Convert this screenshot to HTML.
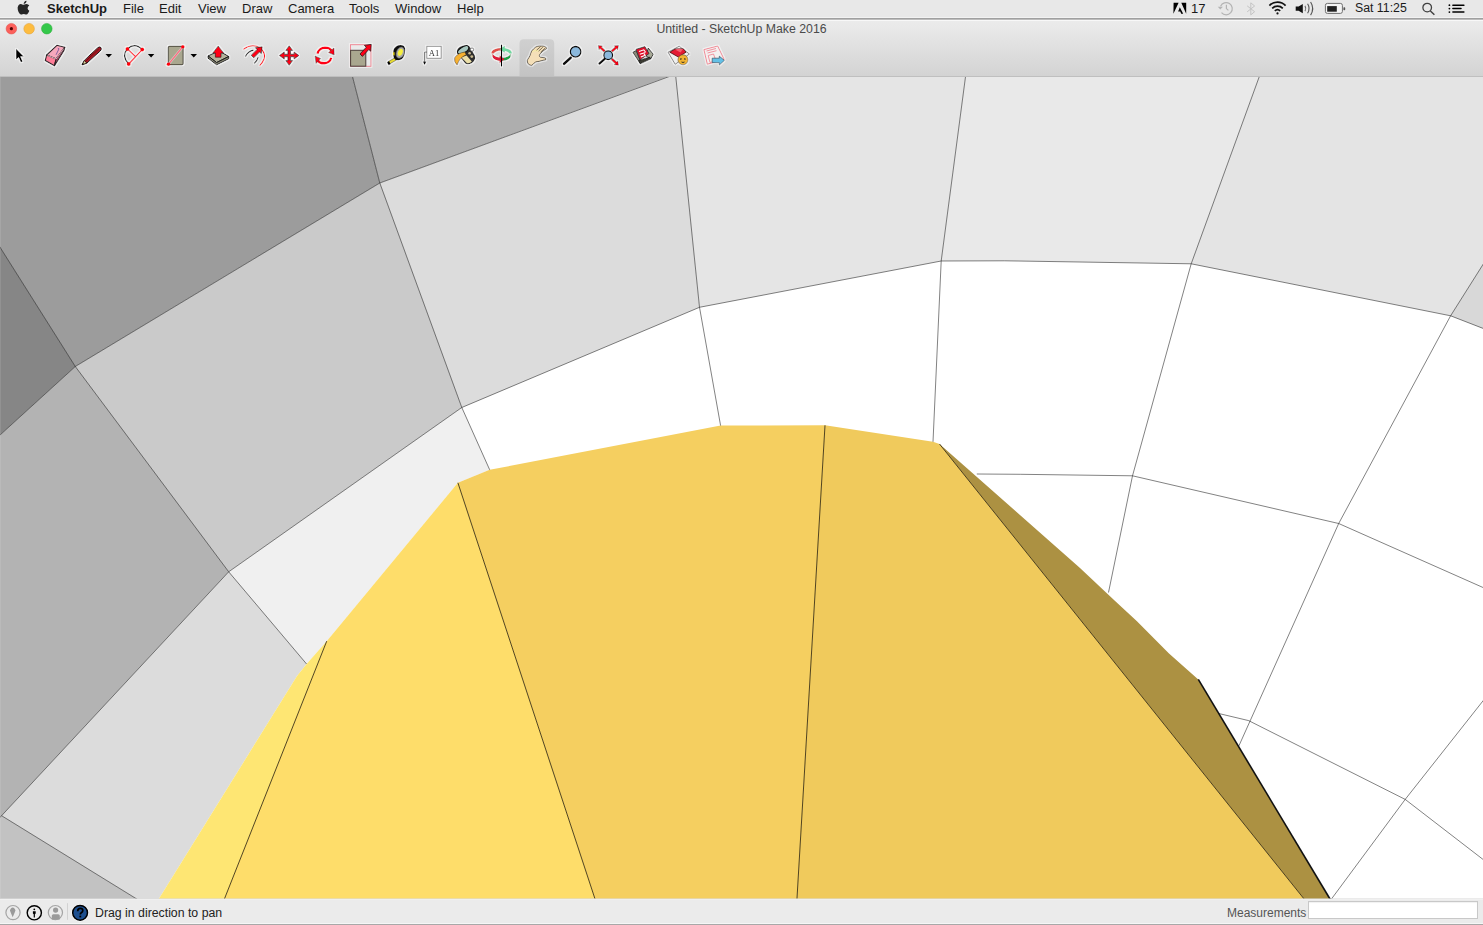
<!DOCTYPE html>
<html><head><meta charset="utf-8">
<style>
html,body{margin:0;padding:0;}
body{width:1483px;height:925px;overflow:hidden;position:relative;background:#e4e4e4;font-family:"Liberation Sans",sans-serif;}
.abs{position:absolute;}
#menubar{left:0;top:0;width:1483px;height:18px;background:linear-gradient(#e8e8e8,#e8e8e8 17px,#f2f2f2 17px);border-bottom:1px solid #a0a0a0;box-sizing:content-box;}
#menubar .m{position:absolute;top:1px;font-size:13px;color:#1a1a1a;line-height:15px;white-space:nowrap;}
#toolbar{left:0;top:19px;width:1483px;height:57px;background:linear-gradient(#bcbcbc,#bcbcbc 1px,#f8f8f8 1px,#f8f8f8 2px,#ebebeb 2px,#e9e9e9 8px,#d3d3d3);border-bottom:1px solid #bfbfbf;}
#title{left:0;top:22px;width:1483px;text-align:center;font-size:12.3px;color:#4a4a4a;line-height:14px;}
#status{left:0;top:898px;width:1483px;height:27px;background:linear-gradient(#f0f0f0,#f0f0f0 1px,#ebebeb 1px,#ebebeb 24px,#f6f6f6 24px,#f6f6f6 25px,#a8a8a8 25px);background-clip:padding-box;border-top:1px solid rgba(219,219,219,0.56);box-sizing:border-box;}
#status .t{position:absolute;font-size:12px;line-height:14px;white-space:nowrap;}
</style></head><body>
<svg class="abs" style="left:0;top:0" width="1483" height="925" viewBox="0 0 1483 925">
  <g id="faces">
<rect x="0" y="60" width="1483" height="850" fill="#fff"/>
<polygon fill="#9c9c9c" points="0.0,70.0 350.8,70.0 379.8,183.0 75.3,366.5 0.0,247.3"/>
<polygon fill="#868686" points="0.0,247.3 75.3,366.5 0.0,435.0"/>
<polygon fill="#aeaeae" points="350.8,70.0 686.9,70.0 379.8,183.0"/>
<polygon fill="#dcdcdc" points="379.8,183.0 675.8,73.6 699.5,307.3 461.8,407.5"/>
<polygon fill="#e5e5e5" points="675.1,70.0 966.4,70.0 941.2,261.0 699.5,307.3"/>
<polygon fill="#e9e9e9" points="966.4,70.0 1261.7,70.0 1191.2,263.8 1080.0,262.0 1004.4,260.8 941.2,261.0"/>
<polygon fill="#e4e4e4" points="1261.7,70.0 1490.0,70.0 1490.0,253.4 1450.6,315.8 1191.2,263.8"/>
<polygon fill="#d8d8d8" points="1490.0,253.4 1450.6,315.8 1490.0,331.1"/>
<polygon fill="#cacaca" points="75.3,366.5 379.8,183.0 461.8,407.5 228.7,571.8"/>
<polygon fill="#b3b3b3" points="0.0,435.0 75.3,366.5 228.7,571.8 1.6,815.7 0.0,817.4"/>
<polygon fill="#f0f0f0" points="228.7,571.8 461.8,407.5 489.7,469.8 457.9,482.8 326.7,641.2 306.6,664.0"/>
<polygon fill="#dcdcdc" points="1.6,815.7 228.7,571.8 306.6,664.0 297.0,676.0 155.0,905.0 146.5,905.0"/>
<polygon fill="#c2c2c2" points="0.0,817.4 1.6,815.7 146.5,905.0 0.0,905.0"/>
<polygon fill="#fee673" points="326.7,641.2 222.0,905.0 155.0,905.0 297.0,676.0 306.6,664.0"/>
<polygon fill="#fedd6a" points="457.9,482.8 597.0,905.0 222.0,905.0 326.7,641.2"/>
<polygon fill="#f5cf60" points="457.9,482.8 489.7,469.8 720.6,425.6 825.0,425.3 796.6,905.0 597.0,905.0"/>
<polygon fill="#f0ca5c" points="825.0,425.3 933.0,441.8 939.5,444.0 1308.9,905.0 796.6,905.0"/>
<polygon fill="#ac9142" points="939.5,444.0 1080.0,567.9 1114.0,600.0 1136.7,621.0 1169.0,653.5 1198.3,679.4 1333.6,905.0 1308.9,905.0"/>
<g fill="none" stroke="#000" stroke-width="0.9" stroke-opacity="0.55">
<polyline points="350.8,70.0 379.8,183.0 686.9,70.0"/>
<polyline points="-5.0,239.3 75.3,366.5 379.8,183.0"/>
<polyline points="-5.0,439.6 75.3,366.5 228.7,571.8 461.8,407.5 379.8,183.0"/>
<polyline points="228.7,571.8 1.6,815.7 -5.0,822.7"/>
<polyline points="228.7,571.8 306.6,664.0"/>
<polyline points="461.8,407.5 489.7,469.8"/>
<polyline points="461.8,407.5 699.5,307.3 941.2,261.0 1004.4,260.8 1080.0,262.0 1191.2,263.8 1450.6,315.8 1490.0,331.1"/>
<polyline points="675.1,70.0 699.5,307.3 720.6,425.6"/>
<polyline points="966.4,70.0 941.2,261.0 933.0,441.8"/>
<polyline points="1261.7,70.0 1191.2,263.8 1132.5,475.8 1108.5,592.5"/>
<polyline points="1490.0,253.4 1450.6,315.8 1338.7,523.5 1238.9,745.9"/>
<polyline points="976.8,474.0 1020.6,474.3 1132.5,475.8 1338.7,523.5 1490.0,590.6"/>
<polyline points="1218.8,713.5 1248.6,720.6 1405.2,799.4 1490.0,864.8"/>
<polyline points="1490.0,692.0 1405.2,799.4 1327.0,905.0"/>
<polyline points="1.6,815.7 146.5,905.0"/>
</g>
<g fill="none" stroke="#3e3212" stroke-width="0.9">
<polyline points="326.7,641.2 222.0,905.0"/>
<polyline points="457.9,482.8 597.0,905.0"/>
<polyline points="825.0,425.3 796.6,905.0"/>
<polyline points="939.5,444.0 1308.9,905.0"/>
</g>
<rect x="0" y="77" width="1" height="821" fill="#fff" fill-opacity="0.1"/>
<polyline fill="none" stroke="#111" stroke-width="1.6" points="1198.3,679.4 1333.6,905.0"/>
</g><!--/faces-->
</svg>
<div id="menubar" class="abs">
<svg class="abs" style="left:0;top:0" width="1483" height="18" viewBox="0 0 1483 18">
<!-- apple -->
<path transform="translate(1.4,0.2)" d="M26.2,8.3 Q26.1,6.3 27.9,5.3 Q26.9,3.8 25,3.8 Q23.8,3.8 23,4.2 Q22.4,4.5 22,4.5 Q21.5,4.5 20.8,4.2 Q20,3.8 19.3,3.9 Q17.6,4 16.8,5.5 Q15.9,7 16.4,9.5 Q16.9,11.8 18.1,13.3 Q18.9,14.3 19.8,14.3 Q20.4,14.3 21,14 Q21.6,13.7 22.3,13.7 Q23,13.7 23.6,14 Q24.2,14.3 24.8,14.3 Q25.9,14.2 26.8,12.7 Q27.4,11.8 27.9,10.6 Q26.3,9.9 26.2,8.3 Z M24.3,2.9 Q25.2,1.8 25.1,0.6 Q23.9,0.7 23.1,1.6 Q22.3,2.5 22.3,3.7 Q23.5,3.8 24.3,2.9 Z" fill="#262626"/>
<!-- adobe -->
<path d="M1173.6,2.7 H1178.6 L1173.4,13.8 Z M1181.3,2.7 H1186.2 V13.8 Z M1179.8,7.2 L1183.2,13.8 H1181.2 L1180.3,11.6 H1178.1 Z" fill="#000"/>
<!-- time machine -->
<g fill="none" stroke="#b4b4b4" stroke-width="1.2">
<path d="M1220.6,6.2 A6.1,6.1 0 1 1 1221.5,12.6"/>
<path d="M1226.4,4.8 V8.6 L1228.4,10.4"/>
</g>
<path d="M1217.8,6.8 L1222.9,6.8 L1220.3,9.6 Z" fill="#b4b4b4"/>
<!-- bluetooth -->
<path d="M1247.2,5.9 L1254.6,11.7 L1250.8,14.9 V2.8 L1254.6,6 L1247.2,11.8" fill="none" stroke="#c4c4c4" stroke-width="1"/>
<!-- wifi -->
<g fill="none" stroke="#111" stroke-width="1.7" stroke-linecap="butt">
<path d="M1269.4,5.6 A11,11 0 0 1 1285.6,5.6"/>
<path d="M1272.2,8.3 A7.6,7.6 0 0 1 1282.8,8.3"/>
<path d="M1274.8,10.8 A4,4 0 0 1 1280.2,10.8"/>
</g>
<circle cx="1277.5" cy="13.4" r="1.1" fill="#111"/>
<!-- volume -->
<path d="M1295.7,6.4 H1298.6 L1302.8,3.9 V13.2 L1298.6,10.8 H1295.7 Z" fill="#111"/>
<g fill="none" stroke-width="1.1">
<path d="M1305,5.9 Q1306.6,8.5 1305,11.1" stroke="#666"/>
<path d="M1307.6,3.8 Q1310.6,8.5 1307.6,13.2" stroke="#555"/>
<path d="M1310.6,2 Q1314.8,8.5 1310.6,15.1" stroke="#555"/>
</g>
<!-- battery -->
<rect x="1325.4" y="3.4" width="17" height="10" rx="2" fill="#f4f4f4" stroke="#6e6e6e" stroke-width="1"/>
<rect x="1327.2" y="6.1" width="9.6" height="5.6" fill="#222"/>
<rect x="1343.4" y="7.3" width="1.8" height="2.9" rx="0.7" fill="#555"/>
<!-- search -->
<circle cx="1427.2" cy="7.6" r="4.3" fill="none" stroke="#404040" stroke-width="1.3"/>
<line x1="1430.4" y1="10.9" x2="1434.4" y2="14.7" stroke="#404040" stroke-width="1.4"/>
<!-- list -->
<g fill="#000"><circle cx="1449.4" cy="5.2" r="0.9"/><circle cx="1449.4" cy="8.6" r="0.9"/><circle cx="1449.4" cy="12.1" r="0.9"/></g>
<g stroke="#000" stroke-width="1.5" stroke-linecap="round"><line x1="1452.9" y1="5.2" x2="1463.9" y2="5.2"/><line x1="1452.9" y1="8.6" x2="1461" y2="8.6"/><line x1="1452.9" y1="12.1" x2="1463.9" y2="12.1"/></g>
</svg>

  <span class="m" style="left:47px;font-weight:bold;">SketchUp</span>
  <span class="m" style="left:123px;">File</span>
  <span class="m" style="left:159px;">Edit</span>
  <span class="m" style="left:198px;">View</span>
  <span class="m" style="left:242px;">Draw</span>
  <span class="m" style="left:288px;">Camera</span>
  <span class="m" style="left:349px;">Tools</span>
  <span class="m" style="left:395px;">Window</span>
  <span class="m" style="left:457px;">Help</span>
  <span class="m" style="left:1191px;">17</span>
  <span class="m" style="left:1355px;font-size:12.3px;">Sat 11:25</span>
</div>
<div id="toolbar" class="abs"></div>
<svg class="abs" style="left:0;top:0" width="1483" height="76" viewBox="0 0 1483 76">
<defs>
<filter id="halo" x="-30%" y="-30%" width="160%" height="160%"><feMorphology in="SourceAlpha" operator="dilate" radius="0.8" result="d"/><feFlood flood-color="#fff" flood-opacity="0.55"/><feComposite in2="d" operator="in" result="w"/><feMerge><feMergeNode in="w"/><feMergeNode in="SourceGraphic"/></feMerge></filter>
<linearGradient id="hl" x1="0" y1="0" x2="0" y2="1"><stop offset="0" stop-color="#d0d0d0"/><stop offset="1" stop-color="#c3c3c3"/></linearGradient>
</defs>
<!-- hand highlight -->
<path d="M519.5,76 V43.5 Q519.5,39.2 523.8,39.2 H550 Q554.2,39.2 554.2,43.5 V76 Z" fill="url(#hl)"/>
<g filter="url(#halo)">
<!-- select arrow -->
<path d="M16.1,48.7 L16.1,59.6 L18.7,57.3 L20.9,62.3 L22.6,61.5 L20.4,56.6 L23.7,56.4 Z" fill="#000"/>
<!-- eraser -->
<path d="M46.6,55 L56.9,45.3 L64.8,47.3 L56.1,59 Z" fill="#f7a8bc" stroke="#2a2024" stroke-width="1.1" stroke-linejoin="round"/>
<path d="M46.6,55 L56.1,59 L54.5,65.7 L45.2,60.6 Z" fill="#ff7d98" stroke="#2a2024" stroke-width="1.1" stroke-linejoin="round"/>
<path d="M56.1,59 L64.8,47.3 L64,50.5 L54.5,65.7 Z" fill="#b84868" stroke="#2a2024" stroke-width="1.1" stroke-linejoin="round"/>
<path d="M47.5,55.4 L56.1,59 L63.8,48.5" fill="none" stroke="#ffd0dc" stroke-width="0.8"/>
<path d="M57.8,48.3 L59,48.8 L56,54.8" fill="none" stroke="#8a60a0" stroke-width="1"/>
<!-- pencil -->
<path d="M82,64.8 L84.3,60.4 L97.6,47.8 Q99.6,46 101,47.6 Q102.2,49.2 100.2,51 L86.8,63.2 Z" fill="#a81424" stroke="#1a0a0a" stroke-width="1" stroke-linejoin="round"/>
<path d="M82,64.8 L84.3,60.4 L86.8,63.2 Z" fill="#d8d49c" stroke="#1a0a0a" stroke-width="0.8"/>
<path d="M82,64.8 L82.9,63 L83.8,63.9 Z" fill="#000"/>
<line x1="85.3" y1="61.5" x2="98.7" y2="49" stroke="#601010" stroke-width="0.8"/>
<!-- arc -->
<path d="M127.4,48.9 Q135,42 142.2,49.6" fill="none" stroke="#2a2a2a" stroke-width="1.3"/>
<path d="M127.4,48.9 Q121,56 128.7,64" fill="none" stroke="#2a2a2a" stroke-width="1.3"/>
<path d="M127.4,48.9 L135.4,56.5 M142.2,49.6 L128.7,64" fill="none" stroke="#ff2a3a" stroke-width="1.2"/>
<circle cx="127.4" cy="48.9" r="2" fill="#ff0010"/>
<circle cx="142.2" cy="49.6" r="2" fill="#ff0010"/>
<circle cx="128.7" cy="64" r="2" fill="#ff0010"/>
<!-- rectangle -->
<rect x="168.3" y="46.4" width="14.8" height="18.2" rx="1.2" fill="#a9a78f" stroke="#5e5b4e" stroke-width="1.2"/>
<line x1="168.4" y1="64.3" x2="182.9" y2="46.7" stroke="#fff" stroke-width="2.4" stroke-opacity="0.5"/>
<line x1="168.4" y1="64.3" x2="182.9" y2="46.7" stroke="#ff6a80" stroke-width="1.3"/>
<circle cx="168.4" cy="64.3" r="1.8" fill="#ff0010"/>
<circle cx="182.9" cy="46.7" r="1.8" fill="#ff0010"/>
<!-- push pull -->
<path d="M208,55.9 L219,50.8 L228.8,56.5 L216.6,62.6 Z" fill="#b4b29c" stroke="#111" stroke-width="1" stroke-linejoin="round"/>
<path d="M208,55.9 L216.6,62.6 L228.8,56.5 L228.8,58.7 L216.6,64.8 L208,58.1 Z" fill="#8f8d78" stroke="#111" stroke-width="1" stroke-linejoin="round"/>
<path d="M218.2,46 L223.6,53 L221,53 L221,57.2 L215.4,57.2 L215.4,53 L212.8,53 Z" fill="#ff0018" stroke="#201010" stroke-width="0.6" stroke-linejoin="round"/>
<!-- follow me -->
<path d="M243.4,49.4 Q252,43 260,48 Q266,53 264,59 Q262.5,63 259.6,65.6" fill="none" stroke="#ff1020" stroke-width="1.1"/>
<path d="M245.4,56.5 Q248,51 253.5,50.1" fill="none" stroke="#333" stroke-width="1.1"/>
<path d="M254.2,63.3 Q257.5,60.5 258.2,57.2" fill="none" stroke="#333" stroke-width="1.1"/>
<path d="M253.8,57.8 L259.6,52.0 L261.3,53.7 L262.2,46.8 L255.3,47.7 L257.0,49.4 L251.2,55.2 Z" fill="#ff0018" stroke="#111" stroke-width="0.7" stroke-linejoin="round"/>
<!-- move -->
<rect x="284.6" y="51.3" width="3.3" height="2.9" fill="#fff"/><rect x="290.5" y="51.3" width="3.3" height="2.9" fill="#fff"/><rect x="284.6" y="56.8" width="3.3" height="2.9" fill="#fff"/><rect x="290.5" y="56.8" width="3.3" height="2.9" fill="#fff"/><path d="M289.2,45.8 L292.6,50.4 L290.4,50.4 L290.4,54.3 L294.2,54.3 L294.2,52.1 L298.9,55.5 L294.2,58.9 L294.2,56.7 L290.4,56.7 L290.4,60.6 L292.6,60.6 L289.2,65.3 L285.8,60.6 L288,60.6 L288,56.7 L284.2,56.7 L284.2,58.9 L279.4,55.5 L284.2,52.1 L284.2,54.3 L288,54.3 L288,50.4 L285.8,50.4 Z" fill="#ff0018" stroke="#2a0a0a" stroke-width="0.7" stroke-linejoin="round"/>
<!-- rotate -->
<path d="M317.4,53.8 Q319,48 325,47.6 Q329.5,47.6 331.5,50.5" fill="none" stroke="#ff0018" stroke-width="2.4"/>
<path d="M328.5,52.6 L334,48 L334.2,55 Z" fill="#ff0018" stroke="#222" stroke-width="0.5"/>
<path d="M331.2,57.8 Q329.8,63 324.5,63.3 Q319.8,63.5 317.8,60.5" fill="none" stroke="#ff0018" stroke-width="2.4"/>
<path d="M320.6,58.5 L315,56 L316,63.5 Z" fill="#ff0018" stroke="#222" stroke-width="0.5"/>
<!-- scale -->
<rect x="350.4" y="44.7" width="20.6" height="21.6" fill="#eaeaea" stroke="#f07888" stroke-width="0.9"/>
<rect x="350.6" y="50.3" width="15.2" height="15.9" fill="#a9a78f" stroke="#4a3e3a" stroke-width="1"/>
<path d="M362.4,56.4 L368.8,49.5 L370.7,51.2 L371.3,44.3 L364.4,45.4 L366.3,47.2 L360.0,54.0 Z" fill="#ff0018" stroke="#111" stroke-width="0.7" stroke-linejoin="round"/>
<!-- tape -->
<path d="M388.2,61.6 L395.2,57.6 L396.6,60 L389.6,64 Z" fill="#e8dc30" stroke="#222" stroke-width="0.5"/>
<path d="M387,62.2 L389,61 L390.6,64.2 L388.6,65.3 Z" fill="#000"/>
<path d="M396,46.5 Q399,44.6 402.5,45.3 Q405.6,46.5 405.2,50.5 L404.2,55.5 Q403,59.5 398.6,60.3 Q395,60.6 393.6,57.5 Q392.7,54.5 393.3,50.5 Q393.8,47.8 396,46.5 Z" fill="#111"/>
<ellipse cx="400.3" cy="52.7" rx="4" ry="5.8" transform="rotate(22 400.3 52.7)" fill="#a8a8a8" stroke="#555" stroke-width="0.5"/>
<ellipse cx="400.3" cy="52.4" rx="2.3" ry="3.7" transform="rotate(22 400.3 52.4)" fill="#f6f040"/>
<rect x="393" y="52.2" width="1.6" height="3.2" fill="#d8c820"/>
<!-- text -->
<rect x="426.8" y="46.3" width="14.4" height="12" fill="#fff" stroke="#888" stroke-width="0.9"/>
<text x="434" y="56" font-family="Liberation Serif" font-size="8.5" text-anchor="middle" fill="#333">A1</text>
<path d="M426.8,52.1 H424.6 V62" fill="none" stroke="#333" stroke-width="0.8"/>
<path d="M422.8,61.5 L426.4,61.5 L424.6,65 Z" fill="#111"/>
<!-- paint bucket -->
<path d="M457.3,53.5 Q455.8,49.5 460,46.8 Q465,44 469.4,46.2 L474.8,55.5 Q476.2,59.8 472,62.9 Q468,65 465.3,63.5 Z" fill="#2e2e2e"/>
<ellipse cx="463.2" cy="50" rx="6.3" ry="2.9" transform="rotate(-32 463.2 50)" fill="#a6c6be" stroke="#111" stroke-width="1"/>
<path d="M461.2,57.2 L466.8,63 Q469.5,63.8 471.8,61.5 L466.6,55.5 Z" fill="#ebdfa8"/>
<circle cx="469.6" cy="53.2" r="1.3" fill="#c9b98e"/><circle cx="471.8" cy="56.6" r="1.4" fill="#c9b98e"/>
<circle cx="472" cy="49.6" r="1.7" fill="#fff" stroke="#444" stroke-width="0.7"/>
<path d="M464.9,52 Q457.5,53 454.6,57.8 Q453.8,62 457.1,65 Q458.4,61.2 460.6,58.6 Q463.2,56 466.2,54.8 Z" fill="#f5b130" stroke="#3a3020" stroke-width="0.5"/>
<!-- orbit -->
<path d="M492.6,53.5 A9,4.2 0 0 1 501.6,49.3" fill="none" stroke="#e0504a" stroke-width="2.6"/>
<path d="M501.6,49.3 A9,4.2 0 0 1 510.6,53.5" fill="none" stroke="#72d8a2" stroke-width="2.6"/>
<path d="M492.6,53.5 L492.6,56.5 A9,4.2 0 0 0 501.6,60.7 L501.6,57.7 A9,4.2 0 0 1 492.6,53.5 Z" fill="#de1c3a"/>
<path d="M492.6,53.5 A9,4.2 0 0 0 501.6,57.7 L501.6,60.7 A9,4.2 0 0 1 492.6,56.5 Z" fill="#de1c3a"/>
<path d="M510.6,53.5 L510.6,56.5 A9,4.2 0 0 1 501.6,60.7 L501.6,57.7 A9,4.2 0 0 0 510.6,53.5 Z" fill="#1ea448"/>
<path d="M499.5,55.2 L504.4,59.2 L499.5,63.3 Z" fill="#de1c3a"/>
<path d="M504.8,45.8 L499.6,49.3 L504.8,52.8 Z" fill="#72d8a2"/>
<line x1="501.5" y1="44.6" x2="501.5" y2="66.6" stroke="#000" stroke-width="1.1"/>
<!-- hand -->
<path d="M527.2,60.8 Q527.6,63.6 528.6,64.3 Q530,65.4 531.8,65.4 L532.9,64.4 Q534,63 535.4,62.2 Q537,61.4 539.1,61.4 L543,60.3 Q544.6,60 545.6,59.9 Q546.4,59 545.3,57.9 L540.2,57.1 Q539.2,56.5 539.4,55.4 Q539.6,54.5 540.2,53.8 L542.9,51.1 L546.5,48.6 Q546.8,47.8 546.2,47.4 Q544.5,46.2 542.9,46 L539.1,46 Q537,46.3 535.6,47.1 L533.5,48.9 Q532.3,50 531.6,51.1 Q530.5,53.5 529.9,55.7 Q529,57.5 527.8,59.2 Z" fill="#f4dfb8" stroke="#3c3424" stroke-width="0.8" stroke-linejoin="round"/>
<path d="M532.5,51.5 Q535,50 538.5,51" fill="none" stroke="#f4f0a0" stroke-width="1"/>
<path d="M536.6,50.2 L540.6,46.6 M538.6,51.2 L542.8,47.2 M540.6,52.2 L545,48.2" fill="none" stroke="#4a4030" stroke-width="0.7"/>
<!-- zoom -->
<line x1="564.1" y1="63.8" x2="570.7" y2="57.7" stroke="#111" stroke-width="2.6" stroke-linecap="round"/>
<circle cx="575.6" cy="51.8" r="5.3" fill="#8bb8dc" stroke="#111" stroke-width="1.3"/>
<!-- zoom extents -->
<line x1="599.4" y1="63.6" x2="605" y2="58.6" stroke="#111" stroke-width="2.2" stroke-linecap="round"/>
<circle cx="608.2" cy="55.2" r="4.4" fill="#8bb8dc" stroke="#111" stroke-width="1.2"/>
<path d="M605.3,50.5 L601.5,47.0 L602.5,45.9 L598.2,45.5 L599.0,49.7 L600.0,48.6 L603.9,52.1 Z M612.5,52.1 L616.6,48.6 L617.6,49.7 L618.5,45.5 L614.2,45.8 L615.2,46.9 L611.1,50.5 Z M611.1,59.8 L615.3,63.7 L614.2,64.8 L618.5,65.2 L617.8,61.0 L616.8,62.1 L612.5,58.2 Z" fill="#ff0018" stroke="#3a0a0a" stroke-width="0.4"/>
<!-- 3d warehouse -->
<path d="M632.9,52.3 L636.2,50.5 L640.5,61 L640.3,63.6 Z" fill="#8c8c7c" stroke="#222" stroke-width="0.9" stroke-linejoin="round"/>
<path d="M648.2,48 L653.2,54.2 L650.8,58.8 L646,56 Z" fill="#a8aa98" stroke="#222" stroke-width="0.9" stroke-linejoin="round"/>
<path d="M638.5,60.5 L640.3,63.8 L651,58.8 L649.5,57 Z" fill="#3a3a32" stroke="#111" stroke-width="0.7"/>
<path d="M636,49.3 L644.9,46.6 L649,53.6 L640,59.9 Z" fill="#e0102a" stroke="#233" stroke-width="0.8" stroke-linejoin="round"/>
<path d="M639,51.5 L643.8,49.8 L645.5,52 M639.8,54.2 L645.5,52.4 M640.8,57 L645.2,55.2 L644,53.8" fill="none" stroke="#fff" stroke-width="1.1"/>
<!-- extension warehouse -->
<path d="M668,52.2 L679.2,46.2 L689.4,54 L675.2,64.3 Z" fill="#f0f0f0" stroke="#6a6a6a" stroke-width="0.8" stroke-linejoin="round"/>
<path d="M669.8,52.2 L675,49 L683.5,48.8 L686,52.2 L678.3,57 Z" fill="#e41c34" stroke="#300" stroke-width="0.7" stroke-linejoin="round"/>
<path d="M675,49.5 L679,48.7 L683,49.3 L680.5,52.5 Z" fill="#f46070"/>
<circle cx="683" cy="59.8" r="5" fill="#f2b433" stroke="#6a5a30" stroke-width="0.6"/>
<path d="M681,58 L680.8,60 M684.8,58 L685,60 M681.5,62 Q683,63 684.5,62" fill="none" stroke="#222" stroke-width="0.9"/>
<!-- send to layout -->
<path d="M703.9,49.6 L717.7,46 L724.2,59.5 L707.3,64.2 Z" fill="#f4f0f0" stroke="#f08a96" stroke-width="1"/>
<path d="M706.5,51 L716,48.5 M707.5,53 L716.5,50.7 M708.2,55.5 L713.5,54 L716,61 L710,62.5 Z" fill="none" stroke="#f08a96" stroke-width="0.9"/>
<path d="M712.2,58.2 L719.3,58.2 L719.3,56.2 L724.4,60.4 L719.3,65.1 L719.3,62.7 L712.2,62.7 Z" fill="#64c0e6" stroke="#2a4050" stroke-width="0.6" stroke-linejoin="round"/>
</g>
<!-- dropdown triangles -->
<path d="M105.5,54 L112,54 L108.75,57.4 Z M147.9,54 L154.3,54 L151.1,57.4 Z M190.5,54 L197,54 L193.75,57.4 Z" fill="#000"/>
<!-- traffic lights -->
<circle cx="11.4" cy="28.7" r="5.3" fill="#fc605b" stroke="#de4a45" stroke-width="0.5"/>
<circle cx="11.4" cy="28.7" r="1.6" fill="#4d0000"/>
<circle cx="29.1" cy="28.7" r="5.3" fill="#fdbc40" stroke="#de9f34" stroke-width="0.5"/>
<circle cx="46.8" cy="28.7" r="5.3" fill="#34c84a" stroke="#27aa35" stroke-width="0.5"/>
</svg>

<div id="title" class="abs">Untitled - SketchUp Make 2016</div>
<div id="status" class="abs">
  <svg class="abs" style="left:0;top:-1px" width="100" height="27" viewBox="0 898 100 27">
<circle cx="13" cy="912.6" r="7.1" fill="none" stroke="#a4a4a4" stroke-width="1.2"/>
<path d="M12.7,917.3 L10.5,912 A2.7,2.7 0 1 1 14.9,912 Z" fill="#9a9a9a"/>
<circle cx="34.3" cy="912.8" r="7.1" fill="none" stroke="#000" stroke-width="1.4"/>
<circle cx="34.3" cy="909.3" r="0.9" fill="#000"/>
<path d="M32.9,911.2 H35.7 V913.6 L34.9,914.2 V917.4 H33.7 V914.2 L32.9,913.6 Z" fill="#000"/>
<circle cx="55.4" cy="912.6" r="7.1" fill="none" stroke="#a4a4a4" stroke-width="1.2"/>
<circle cx="55.6" cy="910.1" r="2.6" fill="#9a9a9a"/>
<path d="M51.8,919.6 V915.8 Q51.8,914.3 53.4,914.3 H58.2 Q59.8,914.3 59.8,915.8 V919.6 Z" fill="#9a9a9a"/>
<line x1="67.5" y1="903.2" x2="67.5" y2="919.8" stroke="#d2d2d2" stroke-width="1"/>
<circle cx="80.1" cy="912.8" r="8.6" fill="#fff"/>
<circle cx="80.1" cy="912.8" r="7.4" fill="#1d4f8f" stroke="#000" stroke-width="1.5"/>
<path d="M77.7,911.2 Q77.7,908.3 80.3,908.3 Q82.8,908.3 82.8,910.6 Q82.8,912 81.3,912.8 Q80.3,913.4 80.3,914.6" fill="none" stroke="#000" stroke-width="1.7"/>
<rect x="79.4" y="915.6" width="1.8" height="1.8" fill="#000"/>
</svg>
  <span class="t" style="left:95px;top:7px;color:#222;font-size:12.3px;">Drag in direction to pan</span>
  <span class="t" style="left:1227px;top:7px;color:#555;">Measurements</span>
  <div class="abs" style="left:1308px;top:2px;width:170px;height:18px;background:#fff;border:1px solid #c8c8c8;box-sizing:border-box;box-shadow:inset 0 1px 1px rgba(0,0,0,0.06);"></div>
</div>
</body></html>
